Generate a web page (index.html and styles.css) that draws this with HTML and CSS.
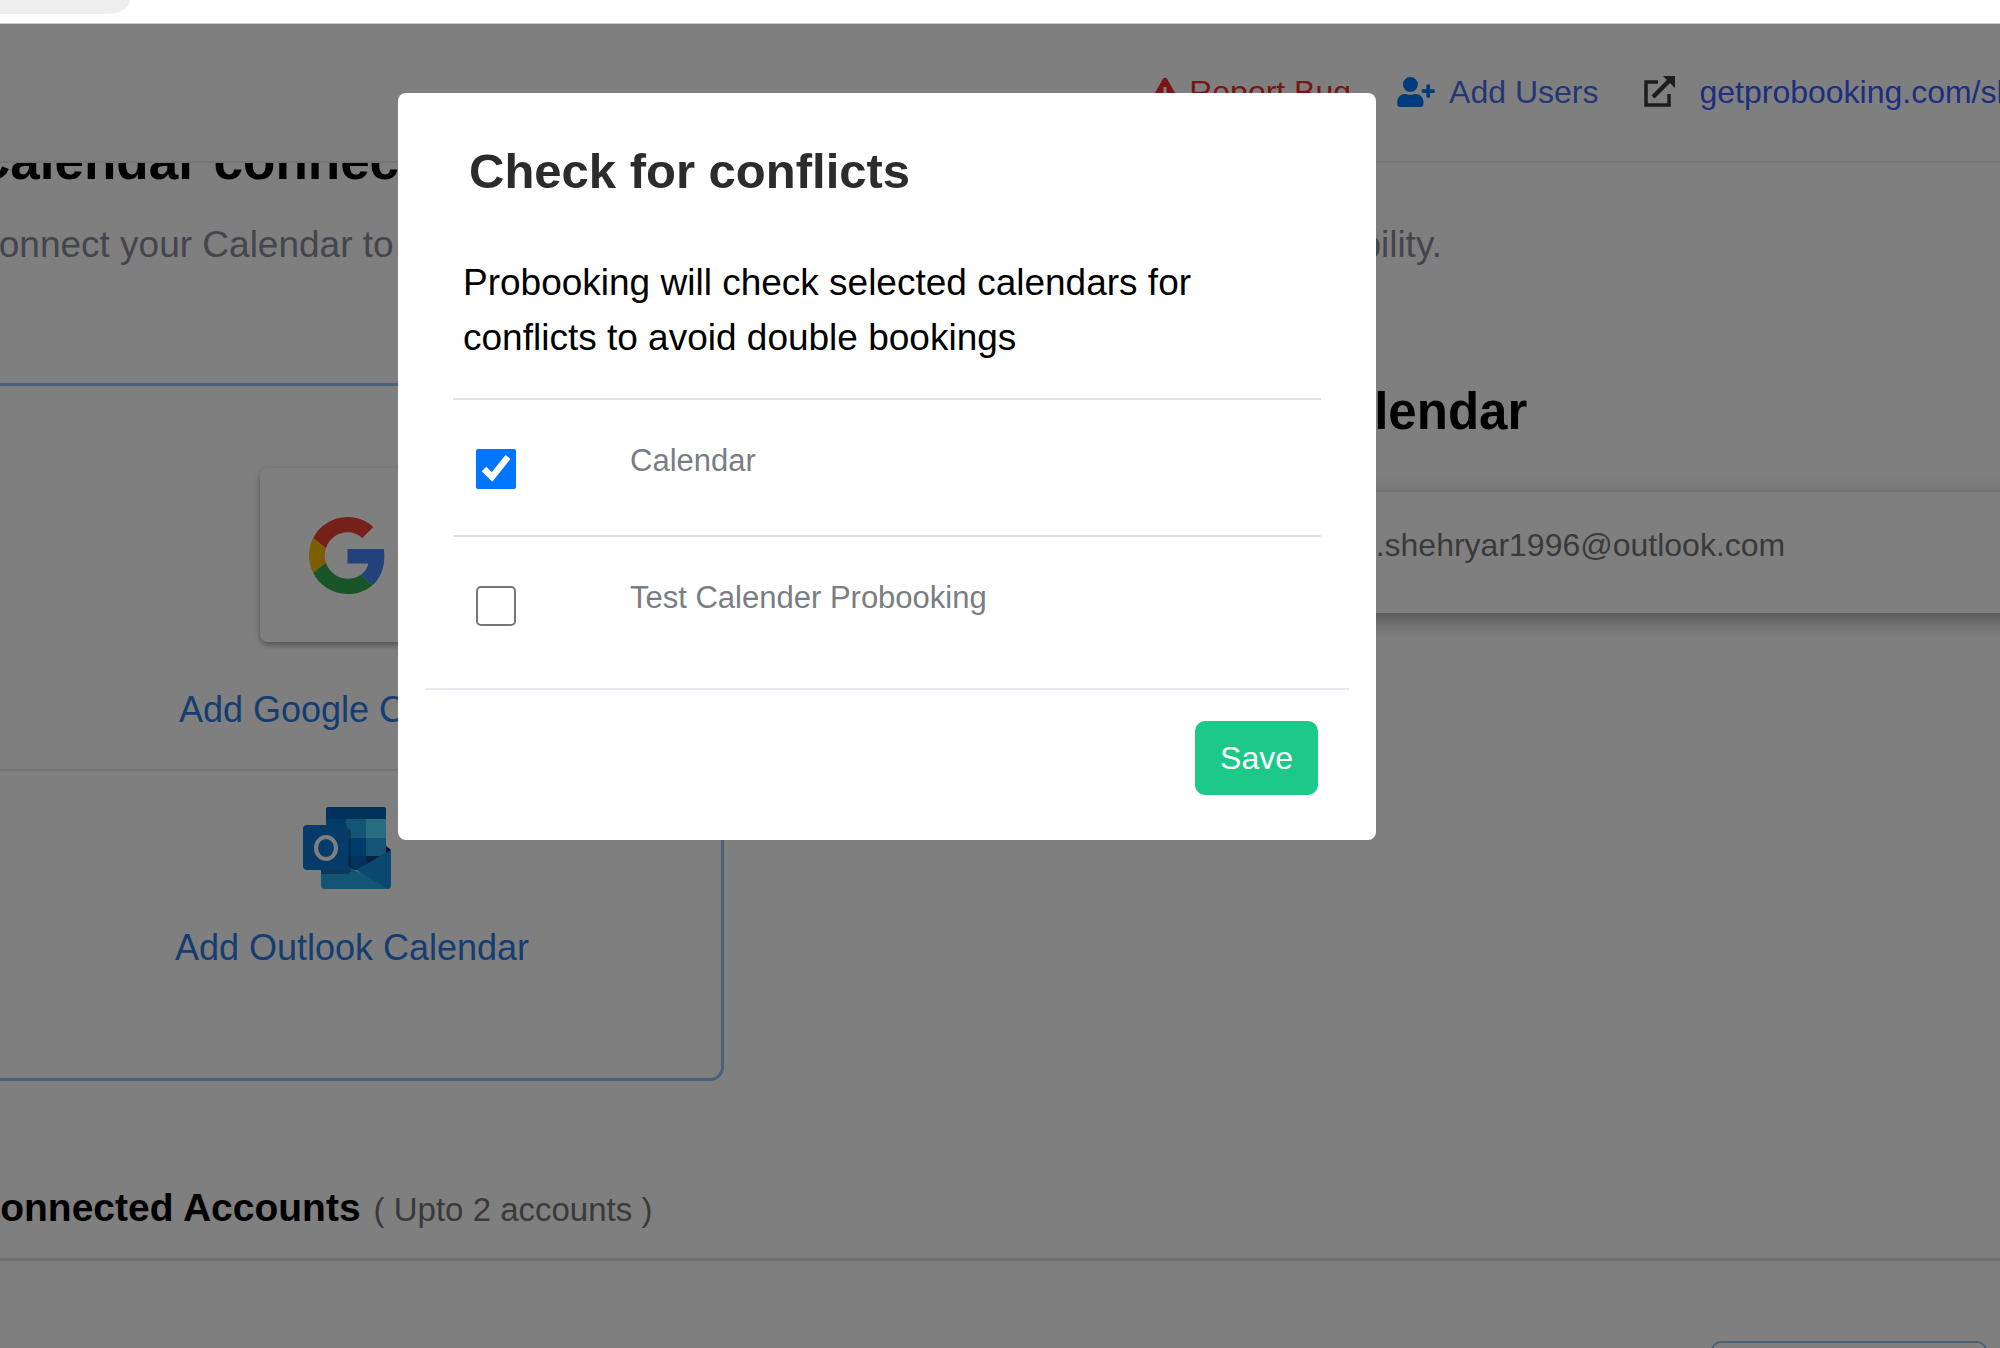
FILE: index.html
```html
<!DOCTYPE html>
<html lang="en">
<head>
    <meta charset="utf-8">
    <meta name="viewport" content="width=device-width, initial-scale=1.0">
    <title>Probooking - Calendar connections</title>
    <link rel="stylesheet" href="styles.css">
</head>
<body>
    <div class="browser-bar">
        <div class="address"></div>
    </div>

    <div class="page">
        <header class="topbar">
            <a href="#" class="top-link report">
                <svg class="icon-warn" viewBox="0 0 576 512" fill="currentColor"><path fill-rule="evenodd" d="M248 20c18-27 62-27 80 0l240 430c18 30-5 62-40 62H48c-35 0-58-32-40-62zM260 165v165h56V165zM288 370a36 36 0 1 0 0 72 36 36 0 0 0 0-72z"/></svg>
                Report Bug
            </a>
            <a href="#" class="top-link users">
                <svg class="icon-user" viewBox="0 0 640 512" fill="currentColor"><path d="M224 256A128 128 0 1 0 224 0a128 128 0 1 0 0 256zm89.600 32h-16.700c-22.200 10.200-46.900 16-72.900 16s-50.600-5.800-72.900-16h-16.700C60.200 288 0 348.200 0 422.400V464c0 26.500 21.500 48 48 48h352c26.500 0 48-21.500 48-48v-41.600c0-74.200-60.200-134.400-134.400-134.400zM624 208h-64v-64c0-8.800-7.200-16-16-16h-32c-8.800 0-16 7.200-16 16v64h-64c-8.800 0-16 7.200-16 16v32c0 8.800 7.200 16 16 16h64v64c0 8.800 7.200 16 16 16h32c8.800 0 16-7.200 16-16v-64h64c8.800 0 16-7.200 16-16v-32c0-8.800-7.200-16-16-16z"/></svg>
                Add Users
            </a>
            <a href="#" class="top-link site">
                <svg class="icon-share" viewBox="0 0 31 31" fill="none" stroke="currentColor"><path stroke-width="3.500" d="M14 6H2v23h23V18"/><path stroke-width="4.500" d="M9 21L26 4"/><path d="M19 0h12v12z" fill="currentColor" stroke="none"/></svg>
                getprobooking.com/shehryar
            </a>
        </header>

        <main class="content">
            <h1>Calendar connections</h1>
            <p class="intro">Connect your Calendar to let Probooking know when you are busy and update availability.</p>

            <div class="columns">
                <section class="providers">
                    <div class="provider">
                        <div class="tile">
                            <svg class="google" viewBox="0 0 48 48"><path fill="#EA4335" d="M24 9.500c3.540 0 6.710 1.220 9.210 3.600l6.850-6.850C35.900 2.380 30.470 0 24 0 14.620 0 6.510 5.380 2.560 13.220l7.980 6.190C12.430 13.720 17.740 9.500 24 9.500z"/><path fill="#4285F4" d="M46.980 24.550c0-1.570-.150-3.090-.380-4.550H24v9.020h12.940c-.580 2.960-2.260 5.480-4.780 7.180l7.730 6c4.510-4.180 7.090-10.360 7.090-17.650z"/><path fill="#FBBC05" d="M10.530 28.590c-.480-1.450-.760-2.990-.760-4.590s.270-3.140.760-4.590l-7.980-6.190C.920 16.460 0 20.120 0 24c0 3.880.920 7.540 2.560 10.780l7.970-6.190z"/><path fill="#34A853" d="M24 48c6.480 0 11.930-2.130 15.890-5.810l-7.730-6c-2.150 1.450-4.920 2.300-8.160 2.300-6.260 0-11.570-4.220-13.470-9.910l-7.980 6.190C6.510 42.620 14.620 48 24 48z"/></svg>
                        </div>
                        <a href="#">Add Google Calendar</a>
                    </div>
                    <div class="provider outlook-provider">
                        <svg class="outlook" viewBox="0 0 88 82">
                            <path fill="#0a1a5c" d="M82 38l6 5-6 6z"/>
                            <rect x="23" width="60" height="60" rx="3" fill="#0078d4"/>
                            <path fill="#0364b8" d="M23 12V3a3 3 0 0 1 3-3h54a3 3 0 0 1 3 3v9z"/>
                            <path fill="#28a8ea" d="M43 12h20v19H43zM63 31h20v18H63z"/>
                            <path fill="#50d9ff" d="M63 12h20v19H63z"/>
                            <path fill="#0364b8" d="M43 49h20v14H43z"/>
                            <path fill="#14447d" d="M63 49h20L63 61z"/>
                            <path fill="#28a8ea" d="M18 42l35 22 35 14a4 4 0 0 1-4 4H22a4 4 0 0 1-4-4z"/>
                            <path fill="#1490df" d="M88 43v35c0 2-1 3-3 4L53 63z"/>
                            <path fill="#0a3c78" opacity=".5" d="M18 63V22h27a3 3 0 0 1 3 3v38a4 4 0 0 1-4 4H18z"/>
                            <rect y="18" width="45" height="45" rx="4" fill="#0f78d4"/>
                            <ellipse cx="23" cy="41" rx="10" ry="11" fill="none" stroke="#fff" stroke-width="4"/>
                        </svg>
                        <a href="#">Add Outlook Calendar</a>
                    </div>
                </section>

                <section class="selected">
                    <h2>Calendar</h2>
                    <div class="account">m.shehryar1996@outlook.com</div>
                </section>
            </div>

            <div class="accounts-head">
                <h3>Connected Accounts</h3>
                <span>( Upto 2 accounts )</span>
            </div>
            <button type="button" class="manage" aria-label="Manage account"></button>
        </main>
    </div>

    <div class="overlay">
        <form class="modal" role="dialog" aria-labelledby="modal-title">
            <h2 class="modal-title" id="modal-title">Check for conflicts</h2>
            <div class="modal-body">
                <p>Probooking will check selected calendars for conflicts to avoid double bookings</p>
                <div class="calendar-row">
                    <input type="checkbox" id="cal-main" checked>
                    <label for="cal-main">Calendar</label>
                </div>
                <div class="calendar-row">
                    <input type="checkbox" id="cal-test">
                    <label for="cal-test">Test Calender Probooking</label>
                </div>
            </div>
            <div class="modal-footer">
                <button type="button" class="save-btn">Save</button>
            </div>
        </form>
    </div>
</body>
</html>
```

FILE: styles.css
```css
* {
    box-sizing: border-box;
}
body {
    margin: 0;
    height: 100vh;
    overflow: hidden;
    font-family: "Liberation Sans", Arial, sans-serif;
    font-size: 32px;
    line-height: 48px;
    background: white;
    color: #000;
}
h1, h2, h3, p {
    margin: 0;
}
a {
    color: #2a7be4;
    text-decoration: none;
}

/* Browser edge */
.browser-bar {
    height: 24px;
    border-bottom: 1px solid #ccc;
}
.address {
    width: 130px;
    height: 14px;
    background: #eee;
    border-bottom-right-radius: 24px 14px;
}

/* Page scrolled under the sticky bar */
.page {
    margin: 0 -196px 0 -28px;
}
.topbar {
    position: relative;
    z-index: 1;
    display: flex;
    justify-content: flex-end;
    align-items: center;
    gap: 46px;
    height: 139px;
    padding: 0 91px 2px 0;
    background: white;
    border-bottom: 2px solid #eaeaea;
}
.top-link {
    display: flex;
    align-items: center;
    gap: 14px;
    white-space: nowrap;
}
.report {
    gap: 8px;
    color: #f02c2c;
}
.users {
    color: #4a6cec;
}
.site {
    color: #3c5cff;
    gap: 24px;
}
.icon-warn {
    width: 32px;
    height: 30px;
}
.icon-user {
    width: 38px;
    height: 30px;
    color: #0078f8;
}
.icon-share {
    width: 31px;
    height: 31px;
    color: #3a3a3a;
}

.content {
    margin-top: -31px;
}
h1, .selected h2 {
    font-size: 51px;
    line-height: 58px;
}
h1 {
    font-size: 53px;
}
.intro {
    margin-top: 27px;
    font-size: 37px;
    line-height: 56px;
    color: #8a8a98;
    white-space: nowrap;
}
.columns {
    display: flex;
    justify-content: space-between;
    align-items: flex-start;
    margin-top: 110px;
    padding-left: 8px;
}
.providers {
    width: 744px;
    border: 3px solid #90c4f4;
    border-radius: 14px;
}
.provider {
    display: flex;
    flex-direction: column;
    align-items: center;
    padding: 82px 0 32px;
    font-size: 36px;
    line-height: 54px;
}
.tile {
    display: flex;
    justify-content: center;
    align-items: center;
    width: 174px;
    height: 174px;
    margin: 0 10px 41px 0;
    border-radius: 8px;
    box-shadow: 0 3px 6px rgba(0,0,0,0.35);
}
.google {
    width: 77px;
    height: 77px;
}
.outlook-provider {
    padding: 36px 0 103px;
    border-top: 2px solid #e4e4e4;
}
.outlook {
    width: 88px;
    height: 82px;
    margin: 0 10px 32px 0;
}
.selected {
    width: 887px;
}
.account {
    margin-top: 51px;
    padding: 29px 40px 44px;
    color: #757575;
    box-shadow: 0 6px 20px rgba(0,0,0,0.4);
}
.accounts-head {
    display: flex;
    align-items: baseline;
    gap: 13px;
    margin-top: 98px;
    padding-bottom: 21px;
    border-bottom: 3px solid #e0e0e0;
}
.accounts-head h3 {
    font-size: 39px;
    line-height: 58px;
}
.accounts-head span {
    font-size: 33px;
    color: #757575;
}
.manage {
    display: block;
    width: 276px;
    height: 80px;
    margin: 80px 209px 0 auto;
    background: white;
    border: 2px solid #90c4f4;
    border-radius: 10px;
}

/* Conflict dialog */
.overlay {
    position: fixed;
    inset: 24px 0 0;
    z-index: 2;
    display: flex;
    justify-content: center;
    align-items: flex-start;
    padding: 69px 226px 0 0;
    background: rgba(0,0,0,0.5);
}
.modal {
    width: 978px;
    padding: 48px 27px 45px 28px;
    background: white;
    border-radius: 8px;
}
.modal-title {
    padding-left: 43px;
    font-size: 49px;
    line-height: 60px;
    color: #2c2c2c;
}
.modal-body {
    padding: 54px 28px 16px 27px;
}
.modal-body p {
    padding: 0 10px 33px;
    font-size: 37px;
    line-height: 55px;
}
.calendar-row {
    display: flex;
    align-items: flex-start;
    gap: 114px;
    padding: 37px 23px 50px;
    border-top: 2px solid #e0e0e0;
}
.calendar-row input {
    width: 40px;
    height: 40px;
    margin: 12px 0 -4px;
}
.calendar-row input:not(:checked) {
    appearance: none;
    background: white;
    border: 2px solid #767676;
    border-radius: 5px;
}
.calendar-row label {
    font-size: 31px;
    color: #7a7d82;
}
.modal-footer {
    display: flex;
    justify-content: flex-end;
    padding: 31px 31px 0;
    border-top: 2px solid #e6e6f0;
}
.save-btn {
    height: 74px;
    padding: 0 25px;
    font-family: inherit;
    font-size: 32px;
    color: white;
    background: #1dc989;
    border: none;
    border-radius: 10px;
    cursor: pointer;
}
```
